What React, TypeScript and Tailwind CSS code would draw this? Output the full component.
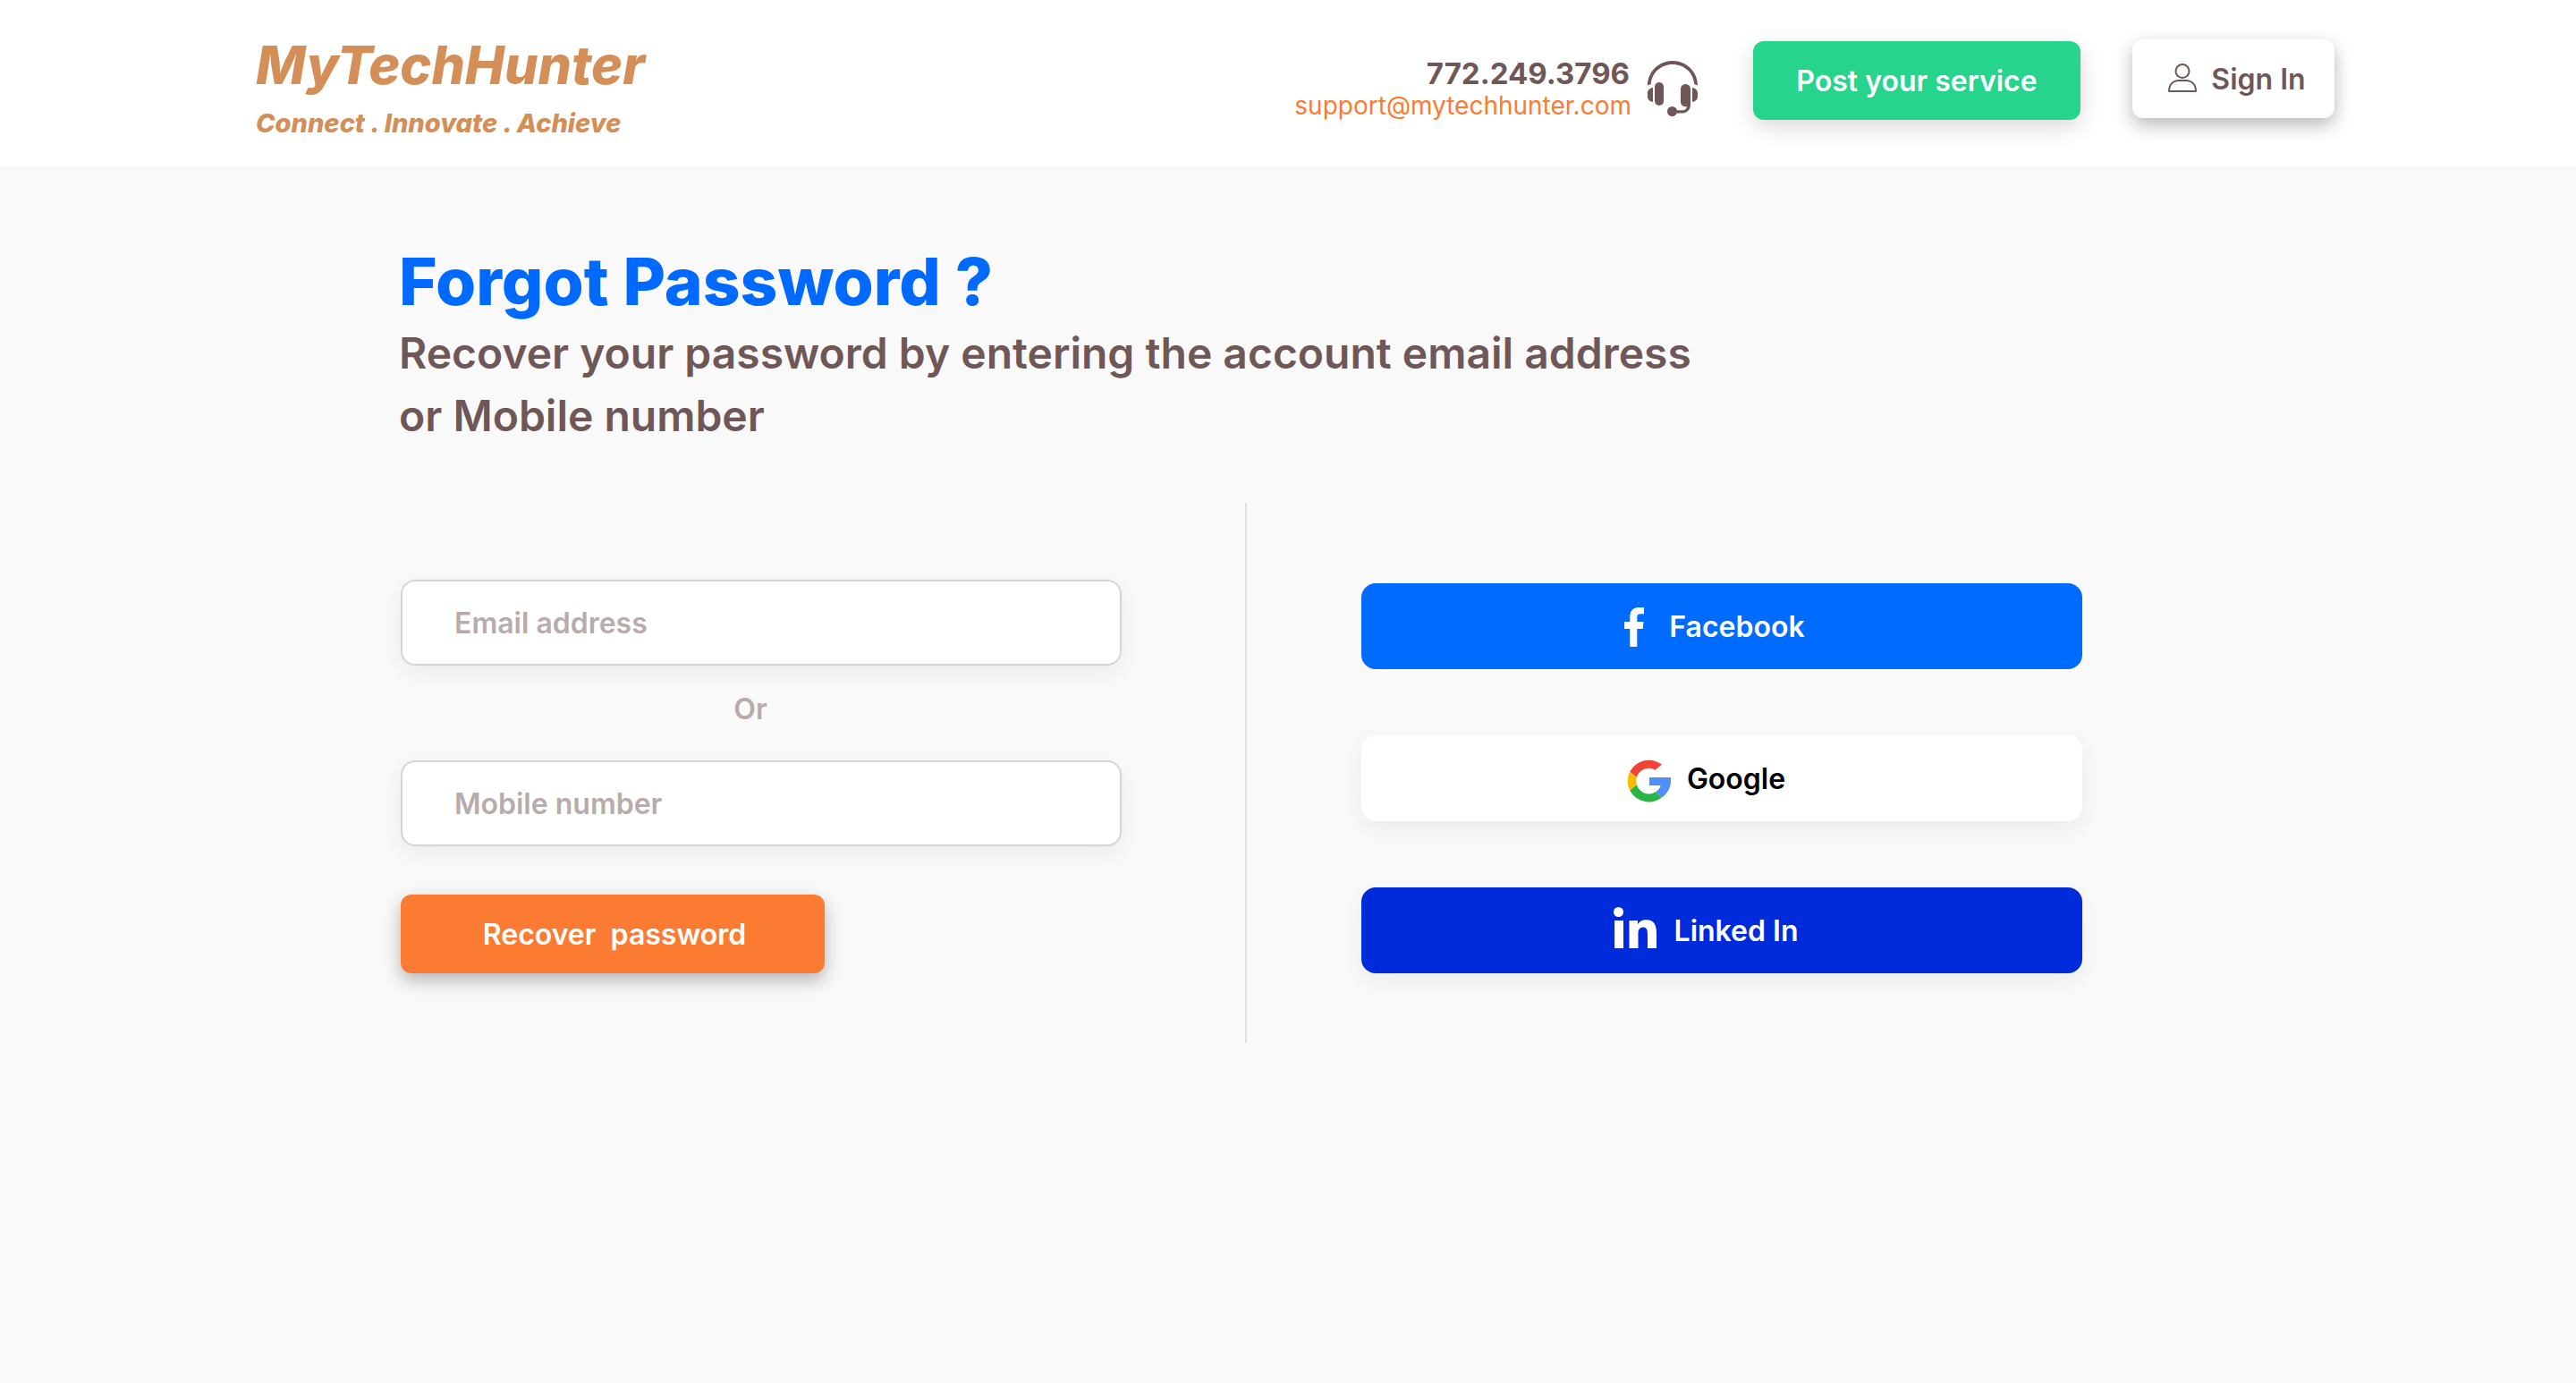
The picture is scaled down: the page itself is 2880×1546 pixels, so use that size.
import React from "react";

function HeadsetIcon() {
  return (
    <svg aria-hidden="true" viewBox="0 0 56 62" className="h-[62px] w-14 shrink-0" fill="#705757">
      <path d="M0 27.500C0 12.300 12.500 0 28 0s28 12.300 28 27.500L52.200 26C51.400 13.500 41 4 28 4S4.600 13.500 3.800 26Z" />
      <rect x="8" y="24" width="10" height="26" rx="5" />
      <path d="M37 31.500a5.500 5.500 0 0 1 11 0V49c0 5.500-4 9.500-9 9.500h-7v-3.300h7.500c2.500 0 4.200-1.700 4.500-4.200-4 1-7-1.500-7-5Z" />
      <circle cx="27.500" cy="56.500" r="5.500" />
      <path d="M6 30v16C2.500 45.500 0 43.300 0 40v-4c0-3.300 2.500-5.500 6-6ZM50 30v16c3.500-.5 6-2.700 6-6v-4c0-3.300-2.500-5.500-6-6Z" />
    </svg>
  );
}

function UserIcon() {
  return (
    <svg aria-hidden="true" viewBox="0 0 32 32" className="mb-1 size-8 shrink-0" fill="none" stroke="#705757" strokeWidth="2">
      <circle cx="16" cy="8.500" r="7.500" />
      <path d="M1 31c0-7.500 4.500-12 11-12h8c6.500 0 11 4.500 11 12Z" strokeLinejoin="round" />
    </svg>
  );
}

function FacebookIcon() {
  return (
    <svg aria-hidden="true" viewBox="0 0 22 44" className="h-11 w-[22px] shrink-0" fill="#fff">
      <path d="M6.300 44V24H0v-8h6.300v-5.500C6.300 3.500 10 0 16 0h6v7.300h-3.800c-3 0-3.900 1.400-3.900 4V16h7.300l-1.100 8h-6.200v20Z" />
    </svg>
  );
}

function GoogleIcon() {
  return (
    <svg aria-hidden="true" viewBox="0 0 48 48" className="mt-1 size-12 shrink-0">
      <path fill="#518ef8" d="M24 20h24c.8 9-2.500 17.300-10 22.500L30.700 36.500c3-1.800 5-4.300 6-7.500H24Z" />
      <path fill="#28b446" d="M38 42.500A24 24 0 0 1 2.100 34.500l7.800-6.300A14 14 0 0 0 30.700 36.500Z" />
      <path fill="#fbbb00" d="M2.100 34.500A24 24 0 0 1 2.200 13.700l7.700 6a14 14 0 0 0 0 8.500Z" />
      <path fill="#f14336" d="M2.200 13.700A24 24 0 0 1 38 5.500l-7.600 6.200A14 14 0 0 0 9.900 19.700Z" />
    </svg>
  );
}

function LinkedInIcon() {
  return (
    <svg aria-hidden="true" viewBox="0 0 48 46" className="mb-2 h-[46px] w-12 shrink-0" fill="#fff">
      <circle cx="5.500" cy="5.500" r="5.500" />
      <path d="M1 15h10v31H1ZM17.500 15H27v4.300c1.500-3 4.800-5.100 9.300-5.100C45.800 14.200 48 20.500 48 29v17H38V30.800c0-3.800-.2-8.300-5-8.300s-5.500 3.800-5.500 8V46h-10Z" />
    </svg>
  );
}

function TextField({ id, label, type }: { id: string; label: string; type: string }) {
  return (
    <input
      id={id}
      name={id}
      type={type}
      aria-label={label}
      placeholder={label}
      className="h-24 w-full rounded-2xl border-2 border-[#d5d5d5] bg-white px-[58px] text-[32px] font-semibold text-[#705757] shadow-[0_8px_24px_rgba(0,0,0,0.06)] outline-none placeholder:text-[#b8abab]"
    />
  );
}

export default function App() {
  return (
    <div className="min-h-screen bg-[#f9f9f9] font-['Inter',sans-serif] text-[32px] leading-10 text-[#705757] [font-optical-sizing:none]">
      <header className="flex h-[186px] items-start bg-white pr-[270px] pl-[286px]">
        <a href="#" className="pt-[35px] text-[#d48e57] italic">
          <span className="block text-[59px] leading-[76px] font-extrabold">MyTechHunter</span>
          <span className="block text-[29px] leading-[54px] font-extrabold">Connect . Innovate . Achieve</span>
        </a>
        <div className="ml-auto flex items-start gap-[18px] pt-[62px] text-right">
          <div>
            <a href="tel:7722493796" className="block pr-0.5 text-[33px] font-bold">772.249.3796</a>
            <a href="mailto:support@mytechhunter.com" className="block text-[28px] leading-8 text-[#fc7b32]">
              support@mytechhunter.com
            </a>
          </div>
          <div className="pt-1.5">
            <HeadsetIcon />
          </div>
        </div>
        <button type="button" className="mt-[46px] ml-[62px] h-[88px] w-[366px] rounded-xl bg-[#26d48c] pt-0.5 font-semibold text-white shadow-[0_8px_24px_rgba(0,0,0,0.15)]">
          Post your service
        </button>
        <button type="button" className="mt-11 ml-[58px] flex h-[88px] w-[226px] items-center justify-center gap-4 rounded-xl bg-white pt-0.5 pl-2 font-semibold shadow-[0_8px_20px_rgba(0,0,0,0.28)]">
          <UserIcon />
          Sign In
        </button>
      </header>

      <main className="pt-[84px] pr-[552px] pl-[446px]">
        <h1 className="text-[73px] leading-[90px] font-extrabold text-[#0069ff]">Forgot Password ?</h1>
        <p className="max-w-[1500px] text-[48px] leading-[70px] font-semibold">
          Recover your password by entering the account email address or Mobile number
        </p>

        <div className="mt-[62px] flex items-start pl-0.5">
          <form className="flex flex-1 flex-col items-start pt-[86px]" onSubmit={(e) => e.preventDefault()}>
            <TextField id="email" label="Email address" type="email" />
            <div className="flex h-[106px] w-full items-center justify-center pr-6 pb-2 font-semibold text-[#b8abab]">Or</div>
            <TextField id="mobile" label="Mobile number" type="tel" />
            <button type="submit" className="mt-[54px] h-[88px] w-[474px] rounded-xl bg-[#fc7b32] pt-0.5 pl-1 font-semibold whitespace-pre text-white shadow-[0_8px_20px_rgba(0,0,0,0.28)]">
              {"Recover  password"}
            </button>
          </form>
          <div className="mr-32 ml-[138px] h-[604px] w-0.5 bg-[#e0e0e0]" />
          <div className="flex flex-1 flex-col gap-[74px] pt-[90px] font-semibold text-white">
            <button type="button" className="flex h-24 items-center justify-center gap-7 rounded-2xl bg-[#006bff] pt-0.5 pr-4">
              <FacebookIcon />
              Facebook
            </button>
            <button type="button" className="flex h-24 items-center justify-center gap-[18px] rounded-2xl bg-white pt-0.5 pr-[34px] text-black shadow-[0_8px_24px_rgba(0,0,0,0.06)]">
              <GoogleIcon />
              Google
            </button>
            <button type="button" className="flex h-24 items-center justify-center gap-5 rounded-2xl bg-[#002bdb] pt-0.5 pr-9 shadow-[0_8px_24px_rgba(0,0,0,0.06)]">
              <LinkedInIcon />
              Linked In
            </button>
          </div>
        </div>
      </main>
    </div>
  );
}
